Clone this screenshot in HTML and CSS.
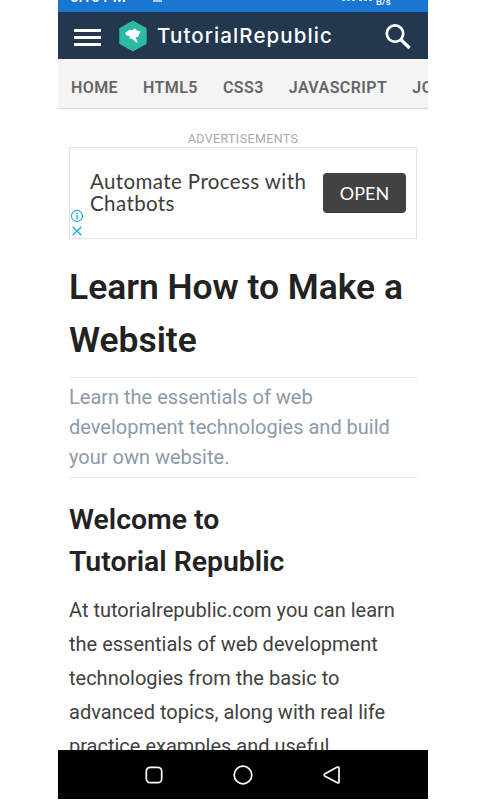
FILE: index.html
```
<!DOCTYPE html>
<html lang="en">
<head>
  <meta charset="UTF-8">
  <meta name="viewport" content="width=device-width, initial-scale=1.0">
  <title>Tutorial Republic</title>
  <link rel="stylesheet" href="styles.css">
</head>
<body>
  <div class="phone">
    <div class="status-bar">
      <span class="clock">5:16 PM</span>
      <span class="flash">ϟ</span>
      <span class="notice"></span>
      <span class="signal"></span>
      <span class="signal"></span>
      <span class="speed">B/s</span>
    </div>

    <header class="header">
      <button class="menu-btn" aria-label="Menu"><i></i><i></i><i></i></button>
      <a class="logo">
        <svg width="30" height="32" viewBox="0 0 30 32">
          <path d="M15 .5 L28.7 8.2 V23.8 L15 31.5 L1.3 23.8 V8.2 Z" fill="#2bbba4"/>
          <path d="M7 13 L11.5 9.8 L14 10.3 L17 8.4 L18.6 10.2 L22.8 11.8 L21.3 14 L20.2 17 L17.6 17 L19.7 22.4 L18.6 22.8 L13.6 18.6 L10.8 18.2 L12.2 16.2 L8.6 15.4 Z" fill="#fff"/>
        </svg>
        <span class="logo-text">TutorialRepublic</span>
      </a>
      <button class="search-btn" aria-label="Search">
        <svg width="28" height="28" viewBox="0 0 28 28" fill="none" stroke="#fff">
          <circle cx="11" cy="10.6" r="8.2" stroke-width="2.7"/>
          <path d="M16.5 16.2 L25.6 25" stroke-width="3.4"/>
        </svg>
      </button>
    </header>

    <nav class="topics">
      <a>HOME</a>
      <a>HTML5</a>
      <a>CSS3</a>
      <a>JAVASCRIPT</a>
      <a>JQUERY</a>
    </nav>

    <main class="content">
      <div class="ad-label">ADVERTISEMENTS</div>
      <div class="ad">
        <div class="ad-icons">
          <svg width="14" height="14" viewBox="0 0 14 14" fill="none" stroke="#1fb1d3">
            <circle cx="7" cy="7" r="5.6" stroke-width="1.1"/>
            <path d="M7 6 V10.4 M7 3.4 V4.9" stroke-width="1.4"/>
          </svg>
          <svg width="14" height="14" viewBox="0 0 14 14" fill="none" stroke="#1fb1d3">
            <path d="M2.6 2.8 L11.4 11.2 M11.4 2.8 L2.6 11.2" stroke-width="1.4"/>
          </svg>
        </div>
        <div class="ad-title">Automate Process with<br>Chatbots</div>
        <button class="ad-open">OPEN</button>
      </div>

      <h1>Learn How to Make a Website</h1>
      <p class="summary">Learn the essentials of web<br>development technologies and build<br>your own website.</p>
      <h2>Welcome to<br>Tutorial Republic</h2>
      <p class="intro">At tutorialrepublic.com you can learn<br>the essentials of web development<br>technologies from the basic to<br>advanced topics, along with real life<br>practice examples and useful</p>
    </main>

    <footer class="android-nav">
      <svg width="20" height="20" viewBox="0 0 20 20" fill="none" stroke="#fff" stroke-width="1.7">
        <rect x="2.3" y="2.3" width="15.4" height="15.4" rx="4"/>
      </svg>
      <svg width="20" height="20" viewBox="0 0 20 20" fill="none" stroke="#fff" stroke-width="1.7">
        <circle cx="10" cy="10" r="8.8"/>
      </svg>
      <svg width="20" height="20" viewBox="0 0 20 20" fill="none" stroke="#fff" stroke-width="1.7" stroke-linejoin="round">
        <path d="M2.6 9 L15.4 2.1 Q17 1.6 17 3.3 V16.7 Q17 18.4 15.4 17.7 L2.6 11 Q1.6 10 2.6 9 Z"/>
      </svg>
    </footer>
  </div>
</body>
</html>
```

FILE: styles.css
```
* {
  box-sizing: border-box;
}
body {
  margin: 0;
  background: #fff;
  font-family: Roboto, sans-serif;
  overflow: hidden;
}
button {
  border: none;
  background: none;
  padding: 0;
}
svg {
  display: block;
}
.phone {
  display: flex;
  flex-direction: column;
  width: 370px;
  height: 799px;
  margin-left: 58px;
  overflow: hidden;
}

/* status bar, its text is cut by the top edge */
.status-bar {
  display: flex;
  flex: none;
  align-items: flex-start;
  height: 12px;
  padding-left: 12px;
  background: #1976d2;
  color: #fff;
  overflow: hidden;
}
.clock {
  width: 70px;
  margin-top: -12px;
  font-size: 15px;
  font-weight: 500;
  line-height: 18px;
}
.flash {
  width: 13px;
  margin-top: -11px;
  font-size: 12px;
  line-height: 14px;
}
.notice {
  width: 9px;
  height: 2px;
  margin-right: 180px;
  background: #a9cdf2;
}
.signal {
  width: 13px;
  margin-right: 4px;
  border-top: 1px dashed #c5def6;
}
.speed {
  margin-top: -3px;
  font-size: 9.5px;
  font-weight: 500;
  line-height: 10px;
}

.header {
  display: flex;
  flex: none;
  align-items: center;
  height: 47px;
  padding: 0 16px 0 16px;
  background: #23374f;
}
.menu-btn {
  display: flex;
  flex-direction: column;
  gap: 4px;
  width: 27px;
  margin: 3px 17px 0 0;
}
.menu-btn i {
  height: 3px;
  background: #fff;
}
.logo {
  display: flex;
  align-items: center;
  gap: 9px;
}
.logo-text {
  color: #fff;
  font-family: Inter, sans-serif;
  font-size: 20.5px;
  font-weight: 500;
  letter-spacing: 1.1px;
}
.search-btn {
  margin: 2px 0 0 auto;
}

.topics {
  display: flex;
  flex: none;
  gap: 25px;
  height: 50px;
  padding: 4px 0 0 13px;
  border-bottom: 1px solid #d7d7d7;
  background: #f4f4f4;
  overflow: hidden;
}
.topics a {
  color: #666;
  font-size: 16px;
  font-weight: 600;
  letter-spacing: 0.42px;
  line-height: 50px;
}

.content {
  flex: 1;
  min-height: 0;
  padding: 22px 11px 0;
  overflow: hidden;
}
.ad-label {
  color: #aaa;
  font-size: 12.5px;
  letter-spacing: 0.37px;
  line-height: 16px;
  text-align: center;
}
.ad {
  display: flex;
  height: 92px;
  border: 1px solid #e3e3e3;
}
.ad-icons {
  display: flex;
  flex-direction: column;
  justify-content: flex-end;
  gap: 1px;
  width: 20px;
}
.ad-title {
  flex: 1;
  padding-top: 22px;
  color: #3c3c3c;
  font-family: Lato, sans-serif;
  font-size: 20.5px;
  letter-spacing: 0.4px;
  line-height: 22px;
  white-space: nowrap;
}
.ad-open {
  width: 83px;
  height: 40px;
  margin: 25px 10px 0 0;
  border-radius: 4px;
  background: #424242;
  color: #fff;
  font-family: Lato, sans-serif;
  font-size: 18px;
}

h1 {
  margin: 22px 0 10px;
  color: #222;
  font-size: 35.4px;
  font-weight: 600;
  line-height: 53px;
}
.summary {
  margin: 0;
  padding: 4px 0 5px;
  border-top: 1px solid #e8e8e8;
  border-bottom: 1px solid #e8e8e8;
  color: #8c9aa9;
  font-size: 20px;
  line-height: 30px;
  white-space: nowrap;
}
h2 {
  margin: 21px 0 10px;
  color: #222;
  font-size: 28.4px;
  font-weight: 600;
  line-height: 42px;
}
.intro {
  margin: 0;
  color: #414141;
  font-size: 20px;
  line-height: 34px;
  white-space: nowrap;
}

.android-nav {
  display: flex;
  flex: none;
  align-items: center;
  justify-content: center;
  gap: 69px;
  height: 49px;
  background: #000;
}
```
